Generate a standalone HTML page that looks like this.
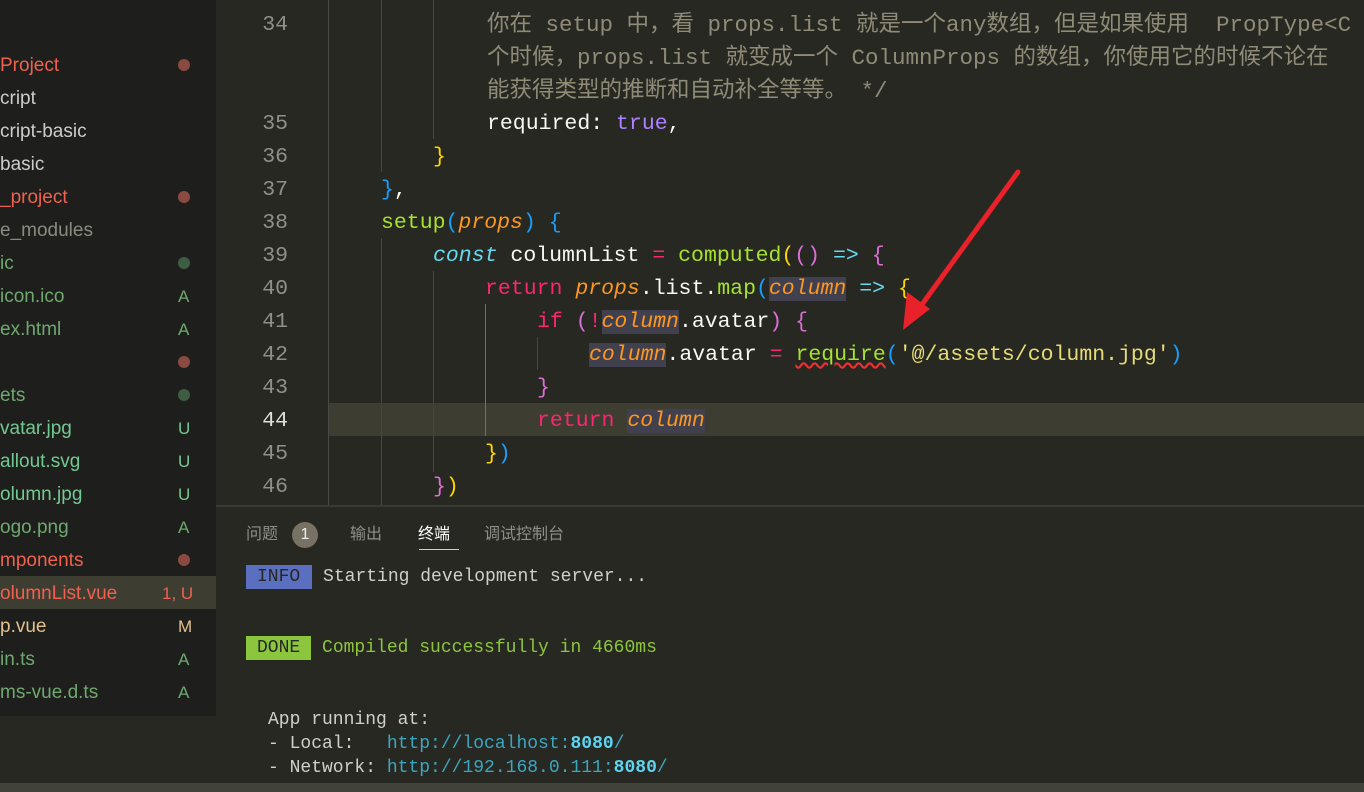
<!DOCTYPE html>
<html><head><meta charset="utf-8"><style>
*{margin:0;padding:0;box-sizing:border-box}
body{width:1364px;height:792px;overflow:hidden;background:#272822;position:relative;font-family:"Liberation Mono","Noto Sans CJK SC",monospace}
#side{position:absolute;left:0;top:0;width:216px;height:716px;background:#1e1f1c}
.it{position:absolute;left:0;width:216px;height:33px;line-height:35px;font-family:"Liberation Sans","Noto Sans CJK SC",sans-serif;font-size:19px;white-space:nowrap}
.it .b{position:absolute;left:178px;top:0;font-size:17px}
.dot{position:absolute;left:178px;top:11px;width:12px;height:12px;border-radius:50%}
.r{color:#f0614f}.w{color:#cccccc}.g{color:#8a8a80}.gr{color:#73c991}.gg{color:#6fa86f}.y{color:#e2c08d}
.code{position:absolute;font-size:21.5px;white-space:pre;line-height:33px;color:#f8f8f2;margin-top:3px}
.ln{position:absolute;left:220px;width:68px;text-align:right;font-size:21.5px;color:#90908a;line-height:33px;margin-top:3px}
.guide{position:absolute;width:1px;background:#464741}
.kw{color:#f92672}.fn{color:#a6e22e}.pa{color:#fd971f;font-style:italic}.st{color:#e6db74}.cm{color:#8f8b77;font-size:22.5px}.bl{color:#66d9ef}.pu{color:#ae81ff}
.hl{background:#41404f}
.term{position:absolute;font-size:18px;white-space:pre;line-height:24px;color:#d0d0c8}
</style></head><body>
<div id="side">
<div class="it r" style="top:48px">Project<span class="dot" style="background:#8a4a42"></span></div>
<div class="it w" style="top:81px">cript</div>
<div class="it w" style="top:114px">cript-basic</div>
<div class="it w" style="top:147px">basic</div>
<div class="it r" style="top:180px">_project<span class="dot" style="background:#8a4a42"></span></div>
<div class="it g" style="top:213px">e_modules</div>
<div class="it gg" style="top:246px">ic<span class="dot" style="background:#3e5e43"></span></div>
<div class="it gg" style="top:279px">icon.ico<span class="b">A</span></div>
<div class="it gg" style="top:312px">ex.html<span class="b">A</span></div>
<div class="it r" style="top:345px"><span class="dot" style="background:#8a4a42"></span></div>
<div class="it gg" style="top:378px">ets<span class="dot" style="background:#3e5e43"></span></div>
<div class="it gr" style="top:411px">vatar.jpg<span class="b">U</span></div>
<div class="it gr" style="top:444px">allout.svg<span class="b">U</span></div>
<div class="it gr" style="top:477px">olumn.jpg<span class="b">U</span></div>
<div class="it gg" style="top:510px">ogo.png<span class="b">A</span></div>
<div class="it r" style="top:543px">mponents<span class="dot" style="background:#8a4a42"></span></div>
<div class="it r" style="top:576px;background:#3e3d32">olumnList.vue<span class="b" style="left:162px">1, U</span></div>
<div class="it y" style="top:609px">p.vue<span class="b">M</span></div>
<div class="it gg" style="top:642px">in.ts<span class="b">A</span></div>
<div class="it gg" style="top:675px">ms-vue.d.ts<span class="b">A</span></div>
</div>
<div style="position:absolute;left:328px;top:403px;width:1036px;height:33px;background:#3e3d32"></div>
<div class="guide" style="left:328px;top:0;height:505px;background:#4a4a44"></div>
<div class="guide" style="left:381px;top:0;height:172px"></div>
<div class="guide" style="left:381px;top:238px;height:267px"></div>
<div class="guide" style="left:433px;top:0;height:139px"></div>
<div class="guide" style="left:433px;top:271px;height:201px"></div>
<div class="guide" style="left:485px;top:304px;height:132px;background:#707070"></div>
<div class="guide" style="left:537px;top:337px;height:33px"></div>
<div class="ln" style="top:6px">34</div>
<div class="ln" style="top:105px">35</div><div class="ln" style="top:138px">36</div><div class="ln" style="top:171px">37</div><div class="ln" style="top:204px">38</div><div class="ln" style="top:237px">39</div><div class="ln" style="top:270px">40</div><div class="ln" style="top:303px">41</div><div class="ln" style="top:336px">42</div><div class="ln" style="top:369px">43</div><div class="ln" style="top:402px;color:#e0e0d8">44</div><div class="ln" style="top:435px">45</div><div class="ln" style="top:468px">46</div>
<div class="code cm" style="left:487px;top:6px">你在 setup 中，看 props.list 就是一个any数组，但是如果使用  PropType&lt;C</div>
<div class="code cm" style="left:487px;top:39px">个时候，props.list 就变成一个 ColumnProps 的数组，你使用它的时候不论在</div>
<div class="code cm" style="left:487px;top:72px">能获得类型的推断和自动补全等等。 */</div>
<div class="code" style="left:487px;top:105px">required: <span class="pu">true</span>,</div>
<div class="code" style="left:433px;top:138px"><span style="color:#ffd700">}</span></div>
<div class="code" style="left:381px;top:171px"><span style="color:#179fff">}</span>,</div>
<div class="code" style="left:381px;top:204px"><span class="fn">setup</span><span style="color:#179fff">(</span><span class="pa">props</span><span style="color:#179fff">)</span> <span style="color:#179fff">{</span></div>
<div class="code" style="left:433px;top:237px"><span class="bl" style="font-style:italic">const</span> columnList <span class="kw">=</span> <span class="fn">computed</span><span style="color:#ffd700">(</span><span style="color:#da70d6">()</span> <span class="bl">=&gt;</span> <span style="color:#da70d6">{</span></div>
<div class="code" style="left:485px;top:270px"><span class="kw">return</span> <span class="pa">props</span>.list.<span class="fn">map</span><span style="color:#179fff">(</span><span class="pa hl">column</span> <span class="bl">=&gt;</span> <span style="color:#ffd700">{</span></div>
<div class="code" style="left:537px;top:303px"><span class="kw">if</span> <span style="color:#da70d6">(</span><span class="kw">!</span><span class="pa hl">column</span>.avatar<span style="color:#da70d6">)</span> <span style="color:#da70d6">{</span></div>
<div class="code" style="left:589px;top:336px"><span class="pa hl">column</span>.avatar <span class="kw">=</span> <span class="fn" style="text-decoration:underline wavy #f03030">require</span><span style="color:#179fff">(</span><span class="st">'@/assets/column.jpg'</span><span style="color:#179fff">)</span></div>
<div class="code" style="left:537px;top:369px"><span style="color:#da70d6">}</span></div>
<div class="code" style="left:537px;top:402px"><span class="kw">return</span> <span class="pa hl">column</span></div>
<div class="code" style="left:485px;top:435px"><span style="color:#ffd700">}</span><span style="color:#179fff">)</span></div>
<div class="code" style="left:433px;top:468px"><span style="color:#da70d6">}</span><span style="color:#ffd700">)</span></div>
<svg style="position:absolute;left:0;top:0" width="1364" height="792"><line x1="1018" y1="172" x2="918" y2="310" stroke="#e8212a" stroke-width="5" stroke-linecap="round"/><polygon points="903,330 907,292 930,309" fill="#e8212a"/></svg>
<div style="position:absolute;left:216px;top:505px;width:1148px;height:2px;background:#3a3a35"></div>
<div style="position:absolute;left:246px;top:522px;font-family:'Liberation Sans','Noto Sans CJK SC',sans-serif;font-size:16px;color:#8f8f88;line-height:24px;white-space:nowrap">
<span>问题</span><span style="display:inline-block;width:26px;height:26px;border-radius:50%;background:#777264;color:#eee;text-align:center;line-height:26px;margin-left:14px;vertical-align:middle">1</span><span style="margin-left:32px">输出</span><span style="margin-left:36px;color:#fff">终端</span><span style="margin-left:34px">调试控制台</span></div>
<div style="position:absolute;left:419px;top:549px;width:40px;height:1px;background:#cfcfc8"></div>
<div class="term" style="left:246px;top:565px"><span style="background:#5a6fbf;color:#272822;padding:0 12px 0 11px;display:inline-block;line-height:24px">INFO</span> Starting development server...</div>
<div class="term" style="left:246px;top:636px;color:#8cc63f"><span style="background:#8cc63f;color:#272822;padding:0 11px 0 11px;display:inline-block;line-height:24px">DONE</span> Compiled successfully in 4660ms</div>
<div class="term" style="left:268px;top:708px">App running at:</div>
<div class="term" style="left:268px;top:732px">- Local:   <span style="color:#3ca6c0">http://localhost:<b style="color:#5fd3ef">8080</b>/</span></div>
<div class="term" style="left:268px;top:756px">- Network: <span style="color:#3ca6c0">http://192.168.0.111:<b style="color:#5fd3ef">8080</b>/</span></div>
<div style="position:absolute;left:0;top:783px;width:1364px;height:9px;background:#414339"></div>
</body></html>
